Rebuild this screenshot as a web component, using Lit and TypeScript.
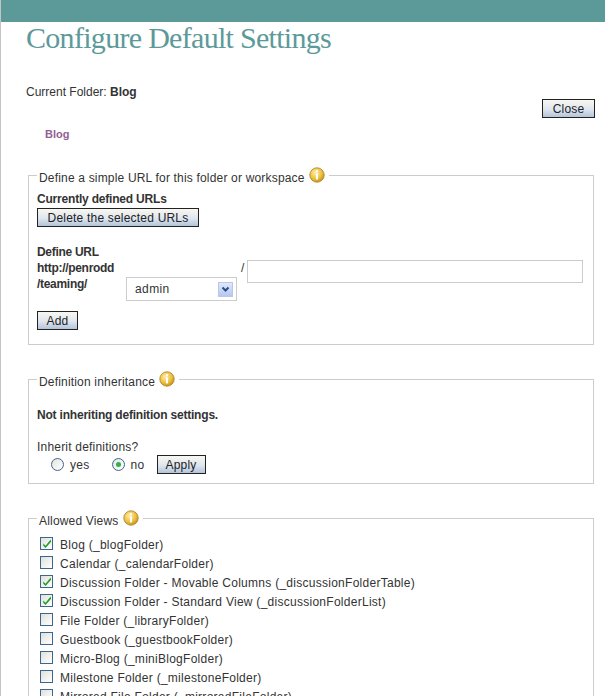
import { LitElement, html, css, svg } from "lit";
import { customElement } from "lit/decorators.js";

const infoIcon = html`<svg class="info" width="16" height="16" viewBox="0 0 16 16">
  <defs><radialGradient id="ig" cx="0.4" cy="0.35" r="0.7"><stop offset="0" stop-color="#fff0b0"/><stop offset="0.6" stop-color="#eec040"/><stop offset="1" stop-color="#c08a10"/></radialGradient></defs>
  <circle cx="8" cy="8" r="7.2" fill="url(#ig)" stroke="#b08a30" stroke-width="0.9"/>
  <rect x="7" y="3.2" width="2" height="2" fill="#fff"/><rect x="7" y="6.4" width="2" height="6" fill="#fff"/>
</svg>`;

const views: [string, boolean][] = [
  ["Blog (_blogFolder)", true],
  ["Calendar (_calendarFolder)", false],
  ["Discussion Folder - Movable Columns (_discussionFolderTable)", true],
  ["Discussion Folder - Standard View (_discussionFolderList)", true],
  ["File Folder (_libraryFolder)", false],
  ["Guestbook (_guestbookFolder)", false],
  ["Micro-Blog (_miniBlogFolder)", false],
  ["Milestone Folder (_milestoneFolder)", false],
  ["Mirrored File Folder (_mirroredFileFolder)", false],
];

const check = svg`<path d="M2.5 6 L5 8.5 L10.5 1.5 L11 4 L5 11 L2.5 8.5 Z" fill="#1f9e2c"/>`;

@customElement("app-root")
export class AppRoot extends LitElement {
  static styles = css`
    :host { display: block; height: 696px; overflow: hidden; background: #fff; border-left: 1px solid #c4c4c4; box-sizing: border-box;
      font-family: "Liberation Sans", Arial, sans-serif; font-size: 12px; color: #333; }
    .bar { height: 22px; background: #5c9a9a; }
    h1 { margin: 0; padding: 0 0 0 25px; height: 58px; box-sizing: border-box; font: 400 30px/32px "Liberation Serif", serif; color: #5c9a9a; letter-spacing: -0.7px; }
    .current { padding: 5px 0 0 25px; height: 19px; line-height: 14px; box-sizing: border-box; }
    .current b { font-weight: 700; }
    .closeRow { display: flex; justify-content: flex-end; padding-right: 10px; height: 20px; }
    .crumb { padding: 9px 0 0 44px; height: 48px; box-sizing: border-box; font-size: 11px; line-height: 13px; font-weight: 700; color: #925f94; }
    button { box-sizing: border-box; height: 19px; padding: 0; border: 1px solid #222; border-radius: 0; background: linear-gradient(#f8f7f0, #dfe6ef 55%, #b3c4d9); font: 12px "Liberation Sans", Arial, sans-serif; color: #222; letter-spacing: 0.2px; }
    .close { width: 53px; }
    fieldset { margin: 0 11px 0 27px; padding: 9px 8px 0; border: 1px solid #ccc; min-width: 0; box-sizing: border-box; }
    legend { padding: 0 4px 0 2px; height: 16px; display: flex; align-items: flex-start; gap: 4px; letter-spacing: 0.18px; color: #333; }
    legend span { padding-top: 4px; line-height: 14px; }
    .info { flex: none; }
    .f1 { height: 178px; }
    .f2 { height: 113px; margin-top: 26px; }
    .f3 { height: 300px; margin-top: 26px; padding-top: 0; }
    .strong { font-weight: 700; line-height: 14px; letter-spacing: -0.2px; }
    .del { display: block; width: 162px; margin-top: 2px; }
    .define { display: grid; grid-template-columns: 89px 111px 10px 336px; margin-top: 18px; }
    .label { line-height: 16px; font-weight: 700; margin-top: -1px; letter-spacing: -0.3px; }
    .sel { box-sizing: border-box; width: 111px; height: 24px; margin-top: 32px; border: 1px solid #ccc; display: flex; align-items: center; justify-content: space-between; padding: 0 3px 0 8px; letter-spacing: 0.4px; }
    .sel i { width: 15px; height: 15px; background: linear-gradient(#dfe8fb, #b4c8f2); border: 1px solid #b8c8e8; box-sizing: border-box; display: flex; align-items: center; justify-content: center; }
    .slash { padding: 16px 0 0 4px; line-height: 14px; }
    .input { box-sizing: border-box; width: 336px; height: 23px; margin-top: 15px; border: 1px solid #ccc; }
    .add { width: 41px; margin-top: 10px; display: block; }
    .not { margin-top: 12px; font-weight: 700; line-height: 14px; letter-spacing: -0.2px; }
    .inherit { margin-top: 18px; line-height: 14px; letter-spacing: 0.2px; }
    .radios { display: flex; align-items: center; margin-top: 1px; margin-left: 14px; height: 19px; letter-spacing: 0.3px; }
    .radio { width: 13px; height: 13px; box-sizing: border-box; border: 1px solid #3c6690; border-radius: 50%; background: linear-gradient(135deg,#e4e4e0,#fff); margin-right: 6px; display: flex; align-items: center; justify-content: center; }
    .radio.on::after { content: ""; width: 5px; height: 5px; border-radius: 50%; background: #2eb04a; }
    .r2 { margin-left: 22px; }
    .apply { width: 49px; margin-left: 12px; }
    .list { display: flex; flex-direction: column; margin-top: 9px; }
    .item { display: flex; align-items: center; height: 19px; letter-spacing: 0.27px; white-space: nowrap; }
    .cb { width: 13px; height: 13px; box-sizing: border-box; border: 1px solid #3c6690; background: linear-gradient(135deg,#e0e0da,#fff); margin: -3px 7px 0 3px; flex: none; }
    .cb svg { display: block; }
  `;

  render() {
    return html`
      <div class="bar"></div>
      <h1>Configure Default Settings</h1>
      <div class="current">Current Folder: <b>Blog</b></div>
      <div class="closeRow"><button class="close">Close</button></div>
      <div class="crumb">Blog</div>
      <fieldset class="f1">
        <legend><span>Define a simple URL for this folder or workspace</span>${infoIcon}</legend>
        <div class="strong">Currently defined URLs</div>
        <button class="del">Delete the selected URLs</button>
        <div class="define">
          <div class="label">Define URL<br />http://penrodd<br />/teaming/</div>
          <div class="sel">admin <i><svg width="9" height="7" viewBox="0 0 9 7"><path d="M1.5 1.5 L4.5 4.5 L7.5 1.5" fill="none" stroke="#2c4c80" stroke-width="2"/></svg></i></div>
          <div class="slash">/</div>
          <div class="input"></div>
        </div>
        <button class="add">Add</button>
      </fieldset>
      <fieldset class="f2">
        <legend><span>Definition inheritance</span>${infoIcon}</legend>
        <div class="not">Not inheriting definition settings.</div>
        <div class="inherit">Inherit definitions?</div>
        <div class="radios">
          <span class="radio"></span>yes
          <span class="radio on r2"></span>no
          <button class="apply">Apply</button>
        </div>
      </fieldset>
      <fieldset class="f3">
        <legend><span>Allowed Views</span>${infoIcon}</legend>
        <div class="list">
          ${views.map(([t, c]) => html`<div class="item"><span class="cb">${c ? html`<svg width="11" height="11" viewBox="0 0 12 12">${check}</svg>` : ""}</span>${t}</div>`)}
        </div>
      </fieldset>
    `;
  }
}
